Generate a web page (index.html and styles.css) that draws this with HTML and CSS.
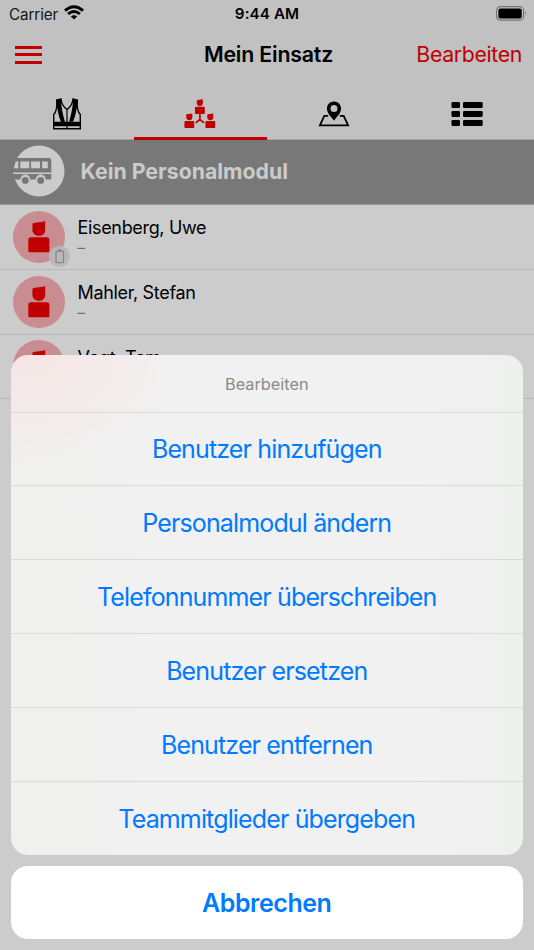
FILE: index.html
```html
<!DOCTYPE html>
<html lang="de">
<head>
<meta charset="utf-8">
<title>Mein Einsatz</title>
<link rel="stylesheet" href="styles.css">
</head>
<body>
<svg class="defs" aria-hidden="true">
  <symbol id="person" viewBox="0 0 22 32">
    <path d="M4.4 3.2Q4.5 2.5 5.2 2.3L9 1.4Q13 1 16.5.3Q17.2.2 17.2 1V9C17.2 12.7 14.5 14.8 10.9 14.8S4.4 12.4 4.4 9Z"/>
    <path d="M2.8 16.3H18.8Q21.4 16.3 21.4 19V29.8Q21.4 31.3 20 31.3H1.7Q.3 31.3.3 29.8V19Q.3 16.3 2.8 16.3Z"/>
  </symbol>
</svg>
<div class="screen">
  <header class="top">
    <div class="status">
      <div class="carrier"><span>Carrier</span>
        <svg width="20" height="15" viewBox="0 0 20 15"><g fill="none" stroke="#000" stroke-width="2.9"><path d="M1 5.6Q10-2.1 19 5.6"/><path d="M4.1 9Q10 4.2 15.9 9"/></g><path d="M6.8 11.5Q10 8.8 13.2 11.5L10 14.6Z"/></svg>
      </div>
      <div class="time">9:44 AM</div>
      <svg class="battery" width="31" height="15" viewBox="0 0 31 15"><rect x=".6" y=".7" width="27" height="13.5" rx="3.8" fill="none" stroke="#777" stroke-width="1.2"/><rect x="2.4" y="2.4" width="23.4" height="10" rx="2"/><path d="M29.2 5Q31 7.4 29.2 9.8Z" fill="#777"/></svg>
    </div>
    <nav class="nav">
      <div class="menu"><i></i><i></i><i></i></div>
      <h1>Mein Einsatz</h1>
      <span class="edit">Bearbeiten</span>
    </nav>
    <div class="tabs">
      <div class="tab">
        <svg width="30" height="34" viewBox="0 0 30 34"><path d="M4.7 3L9 2Q9.5 8.5 15 12.5Q20.5 8.5 21 2L25.3 3Q24.5 14 28.3 17.5V31.8H1.7V17.5Q5.5 14 4.7 3Z" fill="none" stroke="#000" stroke-width="1.4"/><path d="M4.5 3L9 1.6Q9 12 13 25H9Q5 15 4.5 3ZM25.5 3L21 1.6Q21 12 17 25H21Q25 15 25.5 3ZM1.5 24.8H28.5V29.3H1.5Z"/><path d="M15 12.5V32" stroke="#000" stroke-width="1.2"/></svg>
      </div>
      <div class="tab active">
        <svg width="32" height="32" viewBox="0 0 32 32"><g fill="#c00000"><use href="#person" x="10.7" y="1" width="10.4" height="15.3"/><use href="#person" x=".2" y="15.2" width="10.4" height="15.3"/><use href="#person" x="21.2" y="15.2" width="10.4" height="15.3"/></g><path d="M15.9 16V21.5L11.7 24.8M15.9 21.5L20.1 24.8" fill="none" stroke="#c00000" stroke-width="1.7"/></svg>
      </div>
      <div class="tab">
        <svg width="32" height="28" viewBox="0 0 32 28"><path d="M10.2 15.8H6.3L1.9 25.3H30.1L25.7 15.8H21.8" fill="none" stroke="#000" stroke-width="1.8"/><path fill-rule="evenodd" d="M16 1.6C11.8 1.6 9 4.8 9 8.5C9 13 12.7 16.3 16 20.7C19.3 16.3 23 13 23 8.5C23 4.8 20.2 1.6 16 1.6ZM16 5A3.5 3.5 0 1 1 16 12A3.5 3.5 0 0 1 16 5Z"/></svg>
      </div>
      <div class="tab">
        <svg width="32" height="24" viewBox="0 0 32 24"><rect x=".5" width="8.5" height="6" rx="1.2"/><rect x="12" width="19.7" height="6" rx="1.2"/><rect x=".5" y="9" width="8.5" height="6" rx="1.2"/><rect x="12" y="9" width="19.7" height="6" rx="1.2"/><rect x=".5" y="18" width="8.5" height="6" rx="1.2"/><rect x="12" y="18" width="19.7" height="6" rx="1.2"/></svg>
      </div>
    </div>
  </header>
  <section class="module">
    <svg width="52" height="52" viewBox="0 0 52 52"><circle cx="26" cy="26" r="25.5" fill="#cbcbcb"/><path d="M0 13H36Q38.3 13 38.3 15.3V34.5H32.7A5 5 0 0 0 22.7 34.5H17.3A5 5 0 0 0 7.3 34.5H0Z" fill="#787878"/><g fill="#cbcbcb"><path d="M2.6 16.5H5.3V23.3H.9ZM7.3 16.5H16.3V23.3H7.3ZM18.1 16.5H27V23.3H18.1ZM29.1 16.5H34.8V23.3H29.1ZM0 27.4H38.3V29H0Z"/></g><circle cx="12.3" cy="35.4" r="3.4" fill="#787878"/><circle cx="27.7" cy="35.4" r="3.4" fill="#787878"/></svg>
    <h2>Kein Personalmodul</h2>
  </section>
  <ul class="people">
    <li><div class="avatar"><svg width="22" height="32"><use href="#person"/></svg><div class="badge"><svg width="10" height="15" viewBox="0 0 10 15"><rect x="1" y="2.2" width="7.6" height="11.6" rx="1" fill="none" stroke="#808080" stroke-width="1.1"/><path d="M3 1H6.6" stroke="#808080" stroke-width="1.3"/></svg></div></div><div class="who"><b>Eisenberg, Uwe</b><small>–</small></div></li>
    <li><div class="avatar"><svg width="22" height="32"><use href="#person"/></svg></div><div class="who"><b>Mahler, Stefan</b><small>–</small></div></li>
    <li><div class="avatar"><svg width="22" height="32"><use href="#person"/></svg></div><div class="who"><b>Vogt, Tom</b><small>–</small></div></li>
  </ul>
</div>
<div class="overlay">
  <div class="sheet">
    <div class="heading">Bearbeiten</div>
    <div class="option"><span>Benutzer hinzufügen</span></div>
    <div class="option"><span>Personalmodul ändern</span></div>
    <div class="option"><span>Telefonnummer überschreiben</span></div>
    <div class="option"><span>Benutzer ersetzen</span></div>
    <div class="option"><span>Benutzer entfernen</span></div>
    <div class="option"><span>Teammitglieder übergeben</span></div>
  </div>
  <div class="cancel">Abbrechen</div>
</div>
</body>
</html>
```
FILE: styles.css
```css
* { box-sizing: border-box; }
body { margin: 0; font-family: Inter, sans-serif; color: #000; }
svg { display: block; flex: none; }
h1, h2, ul { margin: 0; padding: 0; }
.defs { position: absolute; width: 0; height: 0; }
.screen { height: 950px; background: #cccccc; overflow: hidden; }
.top { height: 140px; background: #c1c1c1; border-bottom: 1px solid #a3a3a3; }
.status { height: 27px; display: grid; grid-template-columns: 1fr auto 1fr; align-items: center; padding: 0 7px 0 9px; font-size: 15.2px; }
.carrier { display: flex; gap: 6px; align-items: center; color: #161616; letter-spacing: -.1px; padding-top: 1px; }
.carrier svg { margin-top: -3px; }
.time { font-weight: 600; letter-spacing: .1px; padding-right: 2px; }
.battery { justify-self: end; }
.nav { height: 56px; display: grid; grid-template-columns: 1fr auto 1fr; align-items: center; padding: 0 12px 2px 15px; }
.menu { width: 27px; display: flex; flex-direction: column; gap: 4.5px; padding-top: 1px; }
.menu i { height: 3px; background: #c00000; }
.nav h1 { font-size: 21.3px; font-weight: 600; letter-spacing: -.17px; }
.edit { justify-self: end; font-size: 21.3px; color: #c00000; letter-spacing: -.36px; }
.tabs { height: 57px; display: grid; grid-template-columns: repeat(4, 1fr); }
.tab { display: flex; align-items: center; justify-content: center; padding-top: 5px; }
.active { border-bottom: 3px solid #c00000; padding-top: 8px; }
.module { height: 65px; background: #787878; border-bottom: 1px solid #999; display: flex; align-items: center; gap: 15.5px; padding: 0 13px 2px; color: #cbcbcb; }
.module h2 { font-size: 21.3px; font-weight: 700; letter-spacing: 0; }
.people { list-style: none; }
.people li { height: 64.8px; border-bottom: 1px solid #b8b8b8; display: flex; align-items: center; padding-left: 13px; gap: 12.5px; }
.avatar { width: 52px; height: 52px; border-radius: 50%; background: #c88d90; display: grid; place-items: center; position: relative; fill: #c00000; }
.badge { position: absolute; left: 36px; top: 35px; width: 21px; height: 21px; border-radius: 50%; background: #b8b8b8; display: grid; place-items: center; }
.who { display: flex; flex-direction: column; }
.who b { font-size: 18px; font-weight: 400; line-height: 23px; letter-spacing: -.33px; }
.who small { font-size: 15px; line-height: 18px; color: #707070; }
.overlay { position: absolute; left: 0; right: 0; bottom: 0; padding: 0 11px 11px 10.5px; display: flex; flex-direction: column; gap: 10.5px; }
.sheet { height: 500.5px; border-radius: 17px; overflow: hidden; background: radial-gradient(ellipse 160px 110px at 12px 0, #f6e5e5, rgba(246,229,229,0)), linear-gradient(90deg, #f0f0ef, #f1f1f1 30%, #f1f1f1 80%, #eef0ee); }
.heading { height: 57px; display: grid; place-items: center; font-size: 16.3px; color: #8a8a8a; padding-top: 1px; }
.option { height: 73.9px; border-top: 1px solid #d8dad8; display: grid; place-items: center; font-size: 25px; letter-spacing: -.86px; color: #007aff; padding-top: 1px; }
.cancel { height: 73.5px; border-radius: 17px; background: #fff; display: grid; place-items: center; font-size: 25px; letter-spacing: -.45px; font-weight: 600; color: #007aff; padding-top: 1px; }
```
